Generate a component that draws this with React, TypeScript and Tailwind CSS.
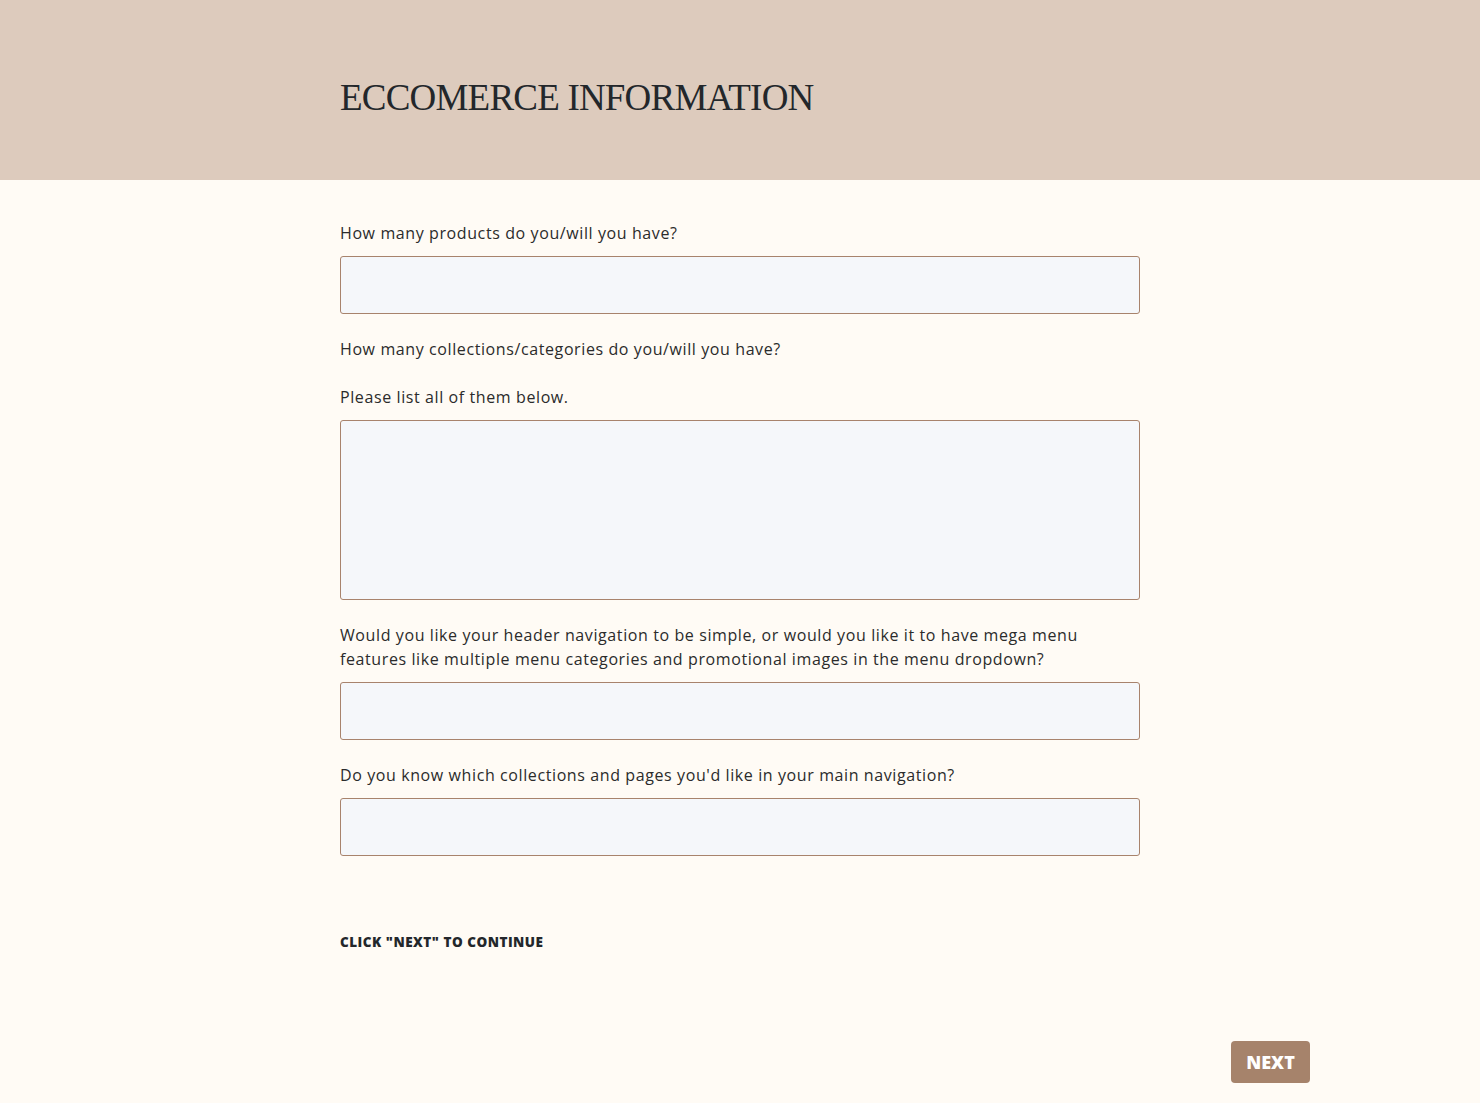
import React from 'react';

const Field: React.FC<{ label: React.ReactNode; tall?: boolean }> = ({ label, tall }) => (
  <div className="flex flex-col">
    <label className="text-[16px] leading-6 tracking-[0.6px] text-[#2b2b2b] mb-[11px]">{label}</label>
    {tall ? (
      <textarea className="h-[180px] w-full resize-none rounded-[3px] border border-[#a8836c] bg-[#f5f7fa] outline-none" />
    ) : (
      <input className="h-[58px] w-full rounded-[3px] border border-[#a8836c] bg-[#f5f7fa] outline-none" />
    )}
  </div>
);

export default function App() {
  return (
    <div className="min-h-screen bg-[#fffbf5] font-['Open_Sans',sans-serif]">
      <header className="h-[180px] bg-[#ddcbbd]">
        <div className="mx-auto w-[800px] pt-[76px]">
          <h1 className="font-['Liberation_Serif',serif] text-[37px] leading-[44px] tracking-[-0.8px] text-[#23272b]">
            ECCOMERCE INFORMATION
          </h1>
        </div>
      </header>

      <main className="mx-auto w-[800px] pt-[41px]">
        <div className="flex flex-col gap-[23px]">
          <Field label="How many products do you/will you have?" />
          <div className="flex flex-col">
            <p className="text-[16px] leading-6 tracking-[0.6px] text-[#2b2b2b] mb-[24px]">
              How many collections/categories do you/will you have?
            </p>
            <Field label="Please list all of them below." tall />
          </div>
          <Field label="Would you like your header navigation to be simple, or would you like it to have mega menu features like multiple menu categories and promotional images in the menu dropdown?" />
          <Field label="Do you know which collections and pages you'd like in your main navigation?" />
        </div>

        <p className="mt-[78px] text-[13.5px] font-extrabold uppercase leading-4 tracking-[0.5px] text-[#23272b]">
          Click "Next" to continue
        </p>
      </main>

      <div className="flex justify-end pr-[170px] pt-[91px] pb-[20px]">
        <button className="h-[42px] w-[79px] rounded-[4px] bg-[#a6836b] text-[18px] font-extrabold text-white">
          NEXT
        </button>
      </div>
    </div>
  );
}
